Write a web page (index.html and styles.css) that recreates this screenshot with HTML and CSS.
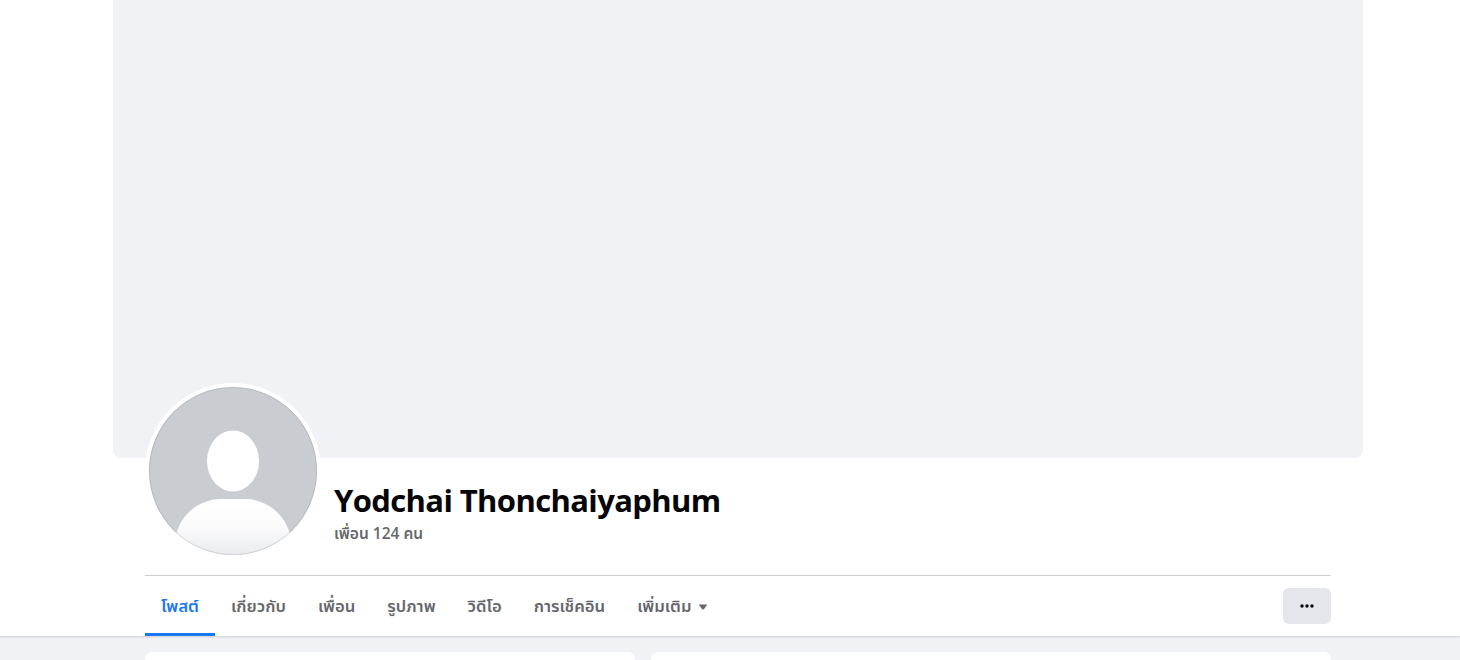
FILE: index.html
```html
<!doctype html>
<html lang="th">

<head>
  <meta charset="UTF-8" />
  <title>Yodchai Thonchaiyaphum</title>
  <link rel="stylesheet" href="styles.css">
</head>

<body>
  <header class="profile-header">
    <div class="cover"></div>
    <div class="profile-inner">
      <div class="profile-info">
        <div class="avatar">
          <svg viewBox="0 0 168 168" width="168" height="168">
            <defs>
              <linearGradient id="bodyFade" x1="0" y1="0" x2="0" y2="1">
                <stop offset="0" stop-color="#ffffff" />
                <stop offset="0.5" stop-color="#fbfbfc" />
                <stop offset="1" stop-color="#e9ebee" />
              </linearGradient>
              <clipPath id="avatarClip">
                <circle cx="84" cy="84" r="84" />
              </clipPath>
            </defs>
            <g clip-path="url(#avatarClip)">
              <rect width="168" height="168" fill="#c9ccd1" />
              <ellipse cx="84" cy="74" rx="26" ry="30.5" fill="#ffffff" />
              <path d="M26 168 V152 C30 128 50 112 72 112 H96 C118 112 138 128 142 152 V168 Z" fill="url(#bodyFade)" />
            </g>
            <circle cx="84" cy="84" r="83.5" fill="none" stroke="#000" stroke-opacity="0.1" />
          </svg>
        </div>
        <div class="name-block">
          <h1 class="name">Yodchai Thonchaiyaphum</h1>
          <a class="friends">เพื่อน 124 คน</a>
        </div>
      </div>
      <nav class="tabs">
        <a class="tab active">โพสต์</a>
        <a class="tab">เกี่ยวกับ</a>
        <a class="tab">เพื่อน</a>
        <a class="tab">รูปภาพ</a>
        <a class="tab">วิดีโอ</a>
        <a class="tab">การเช็คอิน</a>
        <a class="tab">เพิ่มเติม
          <svg class="caret" viewBox="0 0 10 6" width="10" height="6">
            <path d="M0.6 0.6 H9.4 L5.8 5.2 Q5 6 4.2 5.2 Z" fill="#65676b" />
          </svg>
        </a>
        <button class="more-btn" aria-label="more">
          <svg viewBox="0 0 14 4" width="14" height="4">
            <circle cx="2" cy="2" r="1.7" fill="#050505" />
            <circle cx="7" cy="2" r="1.7" fill="#050505" />
            <circle cx="12" cy="2" r="1.7" fill="#050505" />
          </svg>
        </button>
      </nav>
    </div>
  </header>

  <main class="content">
    <div class="card card-left"></div>
    <div class="card card-right"></div>
  </main>
</body>

</html>
```

FILE: styles.css
```css
body,
html {
  margin: 0;
  padding: 0;
  height: 660px;
  overflow: hidden;
  background-color: #f0f2f5;
  font-family: "Open Sans", "Noto Sans", "Noto Sans Thai", sans-serif;
}

.profile-header {
  background-color: #ffffff;
  height: 636px;
  box-shadow: 0 1px 2px rgba(0, 0, 0, 0.15);
}

.cover {
  width: 1250px;
  height: 458px;
  margin: 0 auto 0 113px;
  background-color: #f0f2f5;
  border-radius: 0 0 8px 8px;
}

.profile-inner {
  width: 1186px;
  margin-left: 145px;
}

.profile-info {
  display: flex;
  height: 117px;
  border-bottom: 1px solid #ced0d4;
}

.avatar {
  width: 168px;
  height: 168px;
  margin-top: -75px;
  border: 4px solid #ffffff;
  border-radius: 50%;
  background-color: #ffffff;
  flex-shrink: 0;
}

.avatar svg {
  display: block;
}

.name-block {
  margin-left: 13px;
  padding-top: 23px;
}

.name {
  margin: 0;
  font-size: 31px;
  line-height: 38px;
  letter-spacing: -0.62px;
  font-weight: 700;
  color: #050505;
}

.friends {
  display: block;
  margin-top: 4px;
  font-size: 15.5px;
  line-height: 20px;
  font-weight: 600;
  color: #65676b;
}

.tabs {
  display: flex;
  align-items: stretch;
  height: 60px;
}

.tab {
  display: flex;
  align-items: center;
  gap: 7px;
  padding: 5px 16px 0;
  font-size: 16.7px;
  font-weight: 600;
  color: #65676b;
  border-bottom: 3px solid transparent;
  box-sizing: border-box;
}

.tab.active {
  color: #1877f2;
  border-bottom-color: #1877f2;
}

.more-btn {
  display: flex;
  align-items: center;
  justify-content: center;
  width: 48px;
  height: 36px;
  margin: 12px 0 0 auto;
  padding: 0;
  border: none;
  border-radius: 6px;
  background-color: #e4e6eb;
}

.content {
  display: flex;
  gap: 16px;
  width: 1186px;
  margin: 16px 0 0 145px;
}

.card {
  height: 8px;
  background-color: #ffffff;
  border-radius: 8px 8px 0 0;
}

.card-left {
  width: 490px;
}

.card-right {
  flex: 1;
}
```
